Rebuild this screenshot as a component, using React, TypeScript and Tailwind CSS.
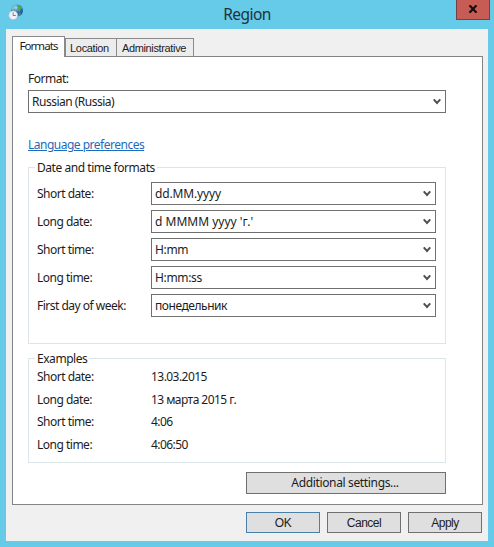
import React from 'react';

const tabs = [
  { label: 'Location', className: 'w-[52px] pr-[3px]' },
  { label: 'Administrative', className: 'w-[78px] -ml-px pr-0.5' },
];

const formats = [
  { label: 'Short date:', value: 'dd.MM.yyyy', className: 'tracking-[-0.15px]' },
  { label: 'Long date:', value: "d MMMM yyyy 'г.'", className: 'tracking-normal' },
  { label: 'Short time:', value: 'H:mm', className: 'tracking-[-0.35px]' },
  { label: 'Long time:', value: 'H:mm:ss', className: 'tracking-[-0.35px]' },
  { label: 'First day of week:', value: 'понедельник', className: 'tracking-[-0.45px]' },
];

const examples = [
  { label: 'Short date:', value: '13.03.2015' },
  { label: 'Long date:', value: '13 марта 2015 г.' },
  { label: 'Short time:', value: '4:06' },
  { label: 'Long time:', value: '4:06:50' },
];

const RegionIcon = () => (
  <svg width="16" height="17" viewBox="0 0 16 17">
    <defs>
      <radialGradient id="globe" cx="0.4" cy="0.25" r="0.8">
        <stop offset="0" stopColor="#a5dcf3" />
        <stop offset="0.45" stopColor="#2f7fc4" />
        <stop offset="1" stopColor="#173f86" />
      </radialGradient>
    </defs>
    <circle cx="9" cy="6.5" r="6" fill="url(#globe)" />
    <path d="M9 1.2c2.2-.6 4.5.8 5.4 2.8l-1.7 1.2-1.2 2.6-2-1.4.6-2.4z" fill="#4fa362" />
    <path d="M3.4 4.4l2.2-2.6 2 .3-1 2.4-2.8 1.8z" fill="#83c9b6" />
    <path d="M11 9.6l2.5-1.2-1.6 3-1.8.6z" fill="#42a36c" />
    <circle cx="5.2" cy="11.3" r="4.5" fill="#eef1f6" stroke="#a9b4c6" strokeWidth="0.8" />
    <path d="M5.2 8.4v3.1h2.6" fill="none" stroke="#5e6f8c" strokeWidth="0.9" />
  </svg>
);

const Chevron = () => (
  <svg width="8" height="7" viewBox="0 0 8 7">
    <path d="M0.7 1.3L4 5l3.3-3.7" fill="none" stroke="#505050" strokeWidth="2" />
  </svg>
);

const Select = ({ value, className = '' }: { value: string; className?: string }) => (
  <div className={`flex h-[23px] items-center justify-between border border-[#707070] bg-white pl-[3px] pr-1 ${className}`}>
    <span>{value}</span>
    <Chevron />
  </div>
);

const Group = ({ title, className, children }: { title: string; className: string; children: React.ReactNode }) => (
  <div className={`relative w-[418px] border border-[#dce5e8] pl-2 ${className}`}>
    <span className="absolute left-1.5 -top-2 bg-white px-[2px] leading-4 tracking-[-0.45px]">{title}</span>
    {children}
  </div>
);

const Button = ({ label, className }: { label: string; className: string }) => (
  <button className={`flex items-center justify-center border bg-[#dfdfdf] ${className}`}>{label}</button>
);

const App = () => {
  return (
    <div className="flex h-[547px] w-[494px] flex-col overflow-hidden bg-[#66cae9] font-['Noto_Sans','Open_Sans',sans-serif] text-[12px] leading-4 tracking-[-0.5px] text-[#1c1c1c]">
      {/* Title bar */}
      <div className="flex h-[29px] shrink-0 items-start justify-between pl-2 pr-1">
        <div className="w-[30px] pt-1">
          <RegionIcon />
        </div>
        <div className="pt-[3px] text-[15.5px] leading-[22px] tracking-[-0.55px] text-[#1d333c]">Region</div>
        <div className="flex h-5 w-[34px] items-center justify-center border border-t-0 border-[#754148] bg-[#c75c55]">
          <svg width="10" height="8" viewBox="0 0 10 8" className="-mt-0.5">
            <path d="M1.5 0.3l7 7.4M8.5 0.3l-7 7.4" stroke="#1a0d0d" strokeWidth="2.2" />
          </svg>
        </div>
      </div>

      {/* Window body */}
      <div className="mx-1.5 flex h-[512px] flex-col bg-[#f0f0f0] pl-1.5 pt-[7px]">
        <div className="flex h-5 items-end">
          <div className="relative z-10 -mb-px flex h-[21px] w-[53px] justify-center border border-b-0 border-[#8a8a8a] bg-white pt-px text-[11.5px] tracking-[-0.95px]">
            Formats
          </div>
          {tabs.map((tab) => (
            <div
              key={tab.label}
              className={`flex h-[18px] items-center justify-center border border-b-0 border-[#8a8a8a] bg-[#ececec] font-['Liberation_Sans',sans-serif] text-[11px] tracking-[-0.35px] ${tab.className}`}
            >
              {tab.label}
            </div>
          ))}
        </div>

        <div className="flex h-[449px] w-[471px] flex-col border border-[#848484] bg-white pl-[15px]">
          <div className="mt-[14px]">Format:</div>
          <Select value="Russian (Russia)" className="mt-[3px] w-[418px]" />
          <a className="mt-6 w-fit text-[#1d6bbd] underline">Language preferences</a>

          <Group title="Date and time formats" className="mt-3.5 flex h-[177px] shrink-0 flex-col gap-[5px] pt-3.5">
            {formats.map((row) => (
              <div key={row.label} className="flex h-[23px] items-center">
                <span className="w-[114px]">{row.label}</span>
                <Select value={row.value} className={`w-[285px] ${row.className}`} />
              </div>
            ))}
          </Group>

          <Group title="Examples" className="mt-3.5 flex h-[105px] shrink-0 flex-col gap-[6.7px] pt-[10px]">
            {examples.map((row) => (
              <div key={row.label} className="flex">
                <span className="w-[114px]">{row.label}</span>
                <span className="tracking-[-0.55px]">{row.value}</span>
              </div>
            ))}
          </Group>

          <Button label="Additional settings..." className="ml-[218px] mt-[9px] h-[22px] w-[200px] border-[#707070] pr-2.5 pl-2 tracking-[-0.35px]" />
        </div>

        <div className="ml-[234px] mt-[7px] flex gap-[7px] font-['Liberation_Sans',sans-serif]">
          <Button label="OK" className="h-[21px] w-[74px] border-[#4a7faa]" />
          <Button label="Cancel" className="h-[21px] w-[74px] border-[#707070]" />
          <Button label="Apply" className="h-[21px] w-[74px] border-[#707070]" />
        </div>
      </div>
    </div>
  );
};

export default App;
